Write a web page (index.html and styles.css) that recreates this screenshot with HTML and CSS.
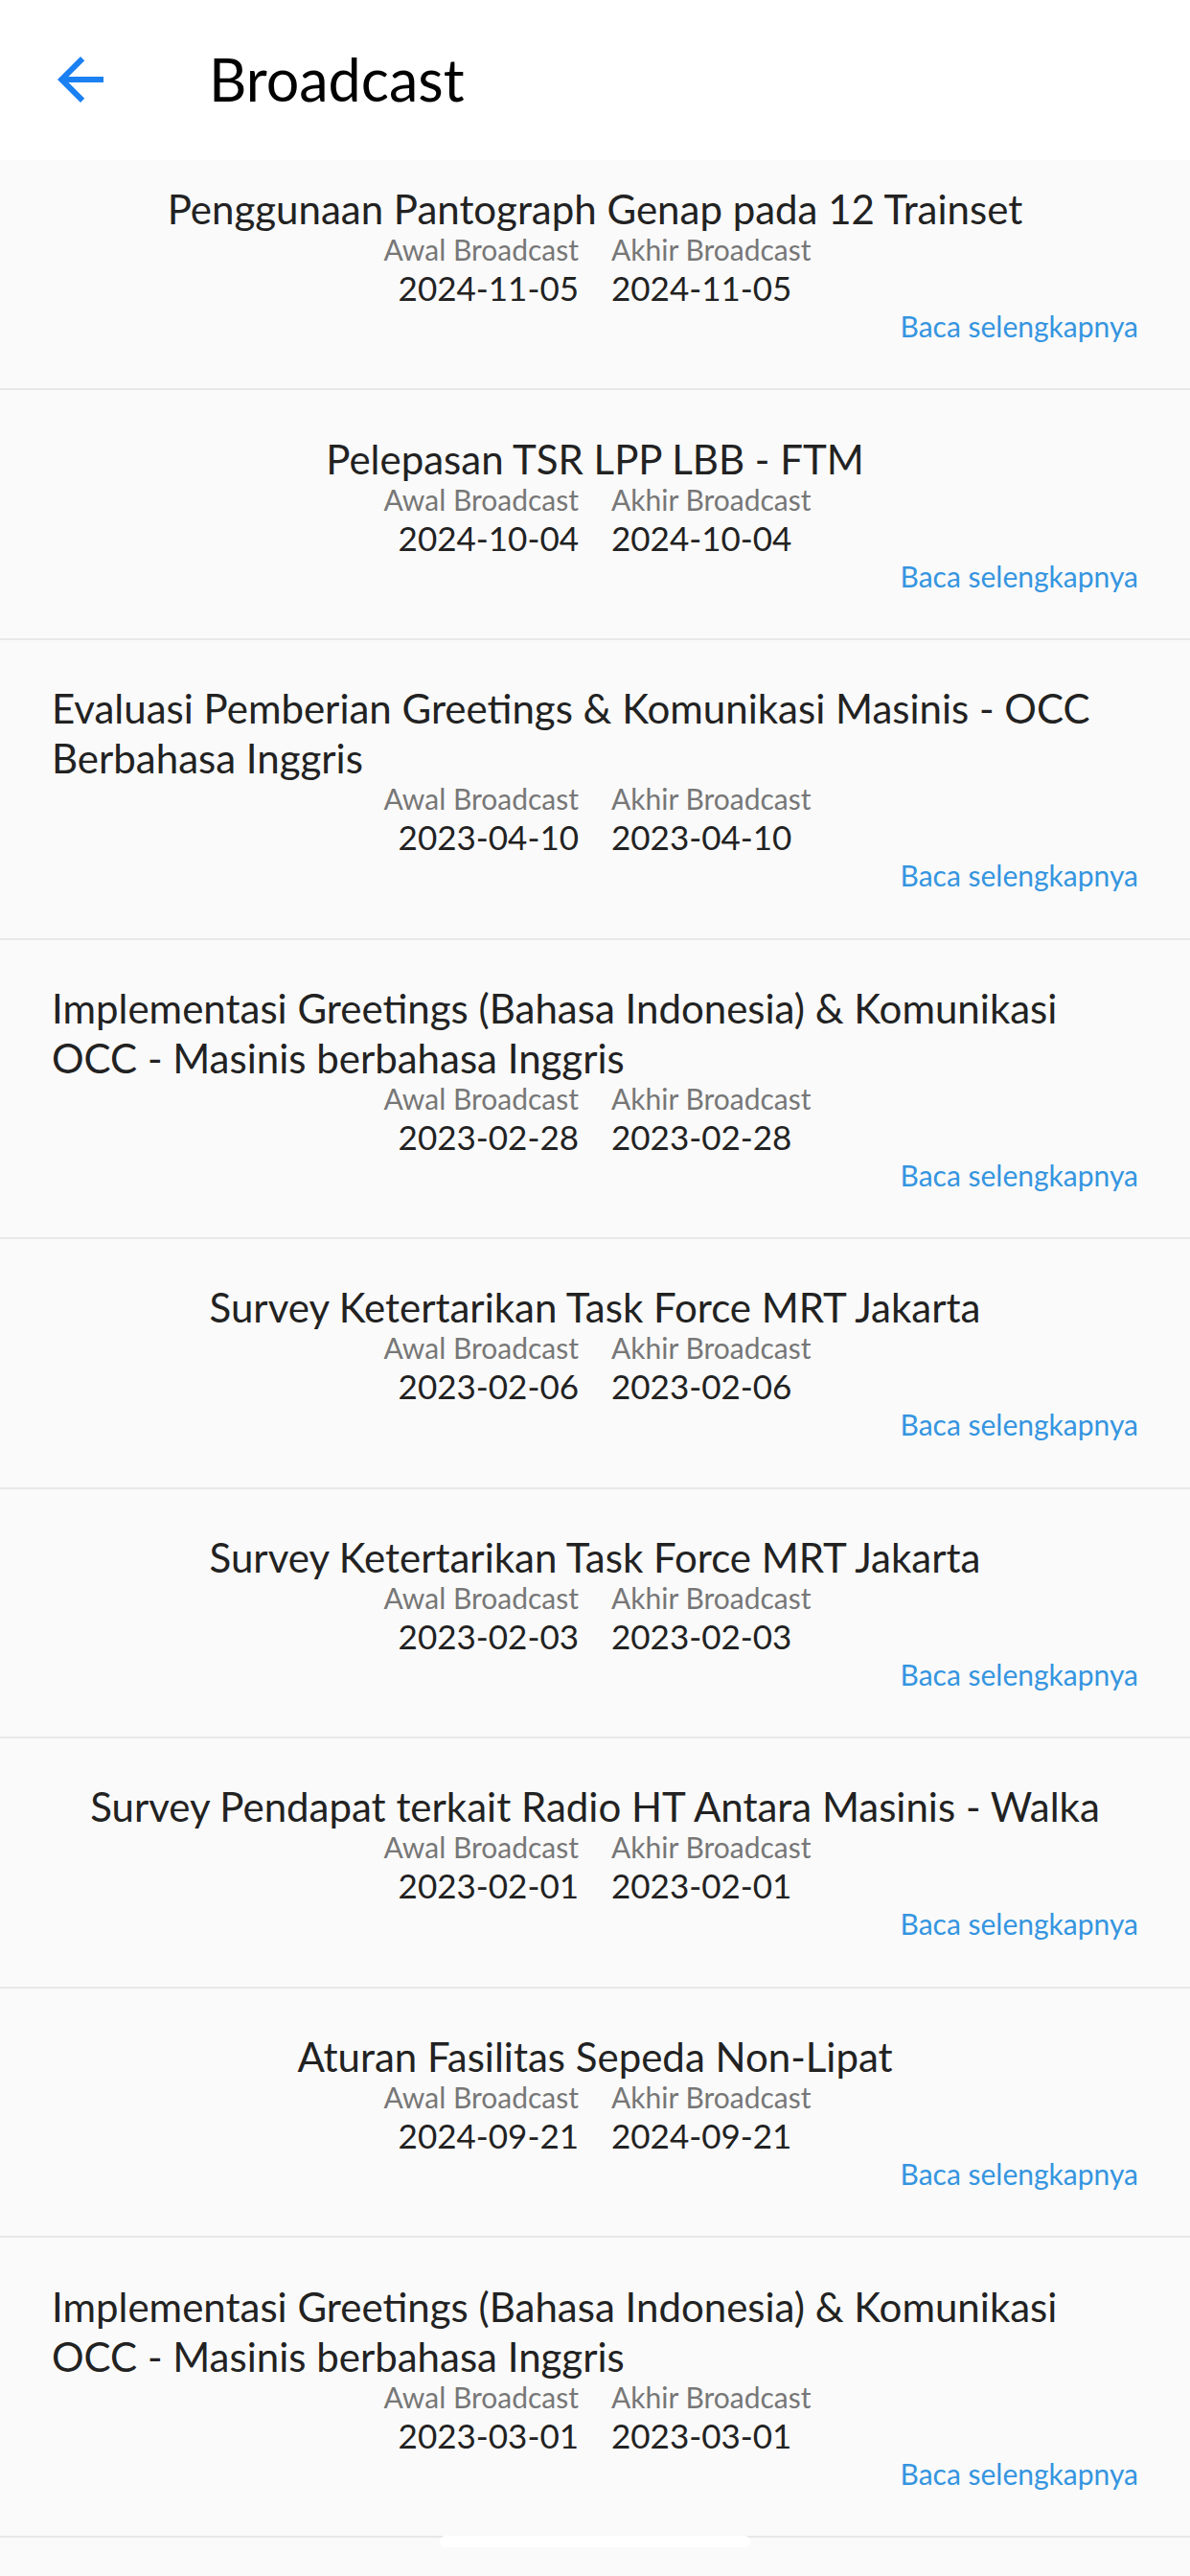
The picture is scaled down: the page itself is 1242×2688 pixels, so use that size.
FILE: index.html
```html
<!DOCTYPE html>
<html lang="id">
<head>
<meta charset="utf-8">
<title>Broadcast</title>
<link rel="stylesheet" href="styles.css">
</head>
<body>
<div class="screen">
  <header class="topbar">
    <button class="back" aria-label="Kembali">
      <svg viewBox="0 0 24 24" width="72" height="72"><path fill="#1b80f1" d="M20 11H7.83l5.59-5.59L12 4l-8 8 8 8 1.41-1.41L7.83 13H20v-2z"/></svg>
    </button>
    <h1 class="title">Broadcast</h1>
  </header>
  <main class="list">
    <article class="item">
      <h2 class="item-title">Penggunaan Pantograph Genap pada 12 Trainset</h2>
      <div class="dates">
        <div class="col col-left"><span class="label">Awal Broadcast</span><span class="date">2024-11-05</span></div>
        <div class="col col-right"><span class="label">Akhir Broadcast</span><span class="date">2024-11-05</span></div>
      </div>
      <a class="more">Baca selengkapnya</a>
    </article>
    <article class="item">
      <h2 class="item-title">Pelepasan TSR LPP LBB - FTM</h2>
      <div class="dates">
        <div class="col col-left"><span class="label">Awal Broadcast</span><span class="date">2024-10-04</span></div>
        <div class="col col-right"><span class="label">Akhir Broadcast</span><span class="date">2024-10-04</span></div>
      </div>
      <a class="more">Baca selengkapnya</a>
    </article>
    <article class="item">
      <h2 class="item-title">Evaluasi Pemberian Greetings &amp; Komunikasi Masinis - OCC Berbahasa Inggris</h2>
      <div class="dates">
        <div class="col col-left"><span class="label">Awal Broadcast</span><span class="date">2023-04-10</span></div>
        <div class="col col-right"><span class="label">Akhir Broadcast</span><span class="date">2023-04-10</span></div>
      </div>
      <a class="more">Baca selengkapnya</a>
    </article>
    <article class="item">
      <h2 class="item-title">Implementasi Greetings (Bahasa Indonesia) &amp; Komunikasi OCC - Masinis berbahasa Inggris</h2>
      <div class="dates">
        <div class="col col-left"><span class="label">Awal Broadcast</span><span class="date">2023-02-28</span></div>
        <div class="col col-right"><span class="label">Akhir Broadcast</span><span class="date">2023-02-28</span></div>
      </div>
      <a class="more">Baca selengkapnya</a>
    </article>
    <article class="item">
      <h2 class="item-title">Survey Ketertarikan Task Force MRT Jakarta</h2>
      <div class="dates">
        <div class="col col-left"><span class="label">Awal Broadcast</span><span class="date">2023-02-06</span></div>
        <div class="col col-right"><span class="label">Akhir Broadcast</span><span class="date">2023-02-06</span></div>
      </div>
      <a class="more">Baca selengkapnya</a>
    </article>
    <article class="item">
      <h2 class="item-title">Survey Ketertarikan Task Force MRT Jakarta</h2>
      <div class="dates">
        <div class="col col-left"><span class="label">Awal Broadcast</span><span class="date">2023-02-03</span></div>
        <div class="col col-right"><span class="label">Akhir Broadcast</span><span class="date">2023-02-03</span></div>
      </div>
      <a class="more">Baca selengkapnya</a>
    </article>
    <article class="item">
      <h2 class="item-title">Survey Pendapat terkait Radio HT Antara Masinis - Walka</h2>
      <div class="dates">
        <div class="col col-left"><span class="label">Awal Broadcast</span><span class="date">2023-02-01</span></div>
        <div class="col col-right"><span class="label">Akhir Broadcast</span><span class="date">2023-02-01</span></div>
      </div>
      <a class="more">Baca selengkapnya</a>
    </article>
    <article class="item">
      <h2 class="item-title">Aturan Fasilitas Sepeda Non-Lipat</h2>
      <div class="dates">
        <div class="col col-left"><span class="label">Awal Broadcast</span><span class="date">2024-09-21</span></div>
        <div class="col col-right"><span class="label">Akhir Broadcast</span><span class="date">2024-09-21</span></div>
      </div>
      <a class="more">Baca selengkapnya</a>
    </article>
    <article class="item">
      <h2 class="item-title">Implementasi Greetings (Bahasa Indonesia) &amp; Komunikasi OCC - Masinis berbahasa Inggris</h2>
      <div class="dates">
        <div class="col col-left"><span class="label">Awal Broadcast</span><span class="date">2023-03-01</span></div>
        <div class="col col-right"><span class="label">Akhir Broadcast</span><span class="date">2023-03-01</span></div>
      </div>
      <a class="more">Baca selengkapnya</a>
    </article>
  </main>
  <div class="home-indicator"></div>
</div>
</body>
</html>
```
FILE: styles.css
```css
html, body {
  margin: 0;
  padding: 0;
  background: #fafafa;
}
body {
  font-family: "Lato", "Open Sans", sans-serif;
  color: #222;
}
.screen {
  position: relative;
  width: 1242px;
  min-height: 2688px;
  overflow: hidden;
}
.topbar {
  height: 167px;
  background: #fff;
  display: flex;
  align-items: center;
}
.back {
  border: 0;
  background: none;
  padding: 0;
  margin: 0 0 0 48px;
  width: 72px;
  height: 72px;
  display: flex;
  margin-top: -1px;
}
.back svg { display: block; }
.title {
  margin: 0 0 0 98px;
  font-size: 61px;
  font-weight: 400;
  color: #000;
  line-height: 1;
  padding-bottom: 2px;
}
.list {
  display: flex;
  flex-direction: column;
}
.item {
  display: flex;
  flex-direction: column;
  align-items: center;
  padding: 45.2px 54px 48.4px;
  border-bottom: 2px solid #e8e8e8;
}
.item:first-child {
  padding-top: 25px;
}
.item-title {
  margin: 0;
  font-size: 42px;
  line-height: 52px;
  font-weight: 400;
  color: #222;
  text-align: left;
}
.dates {
  align-self: stretch;
  display: grid;
  grid-template-columns: 1fr 1fr;
  column-gap: 34px;
}
.col {
  display: flex;
  flex-direction: column;
}
.col-left { align-items: flex-end; }
.col-right { align-items: flex-start; }
.label {
  font-size: 30px;
  line-height: 33px;
  color: #777;
}
.date {
  font-size: 35px;
  line-height: 47px;
  color: #222;
}
.more {
  align-self: flex-end;
  font-size: 30px;
  line-height: 33px;
  color: #3595e0;
}
.home-indicator {
  position: absolute;
  left: 459px;
  top: 2646px;
  width: 324px;
  height: 12px;
  border-radius: 6px;
  background: #fff;
}
```
